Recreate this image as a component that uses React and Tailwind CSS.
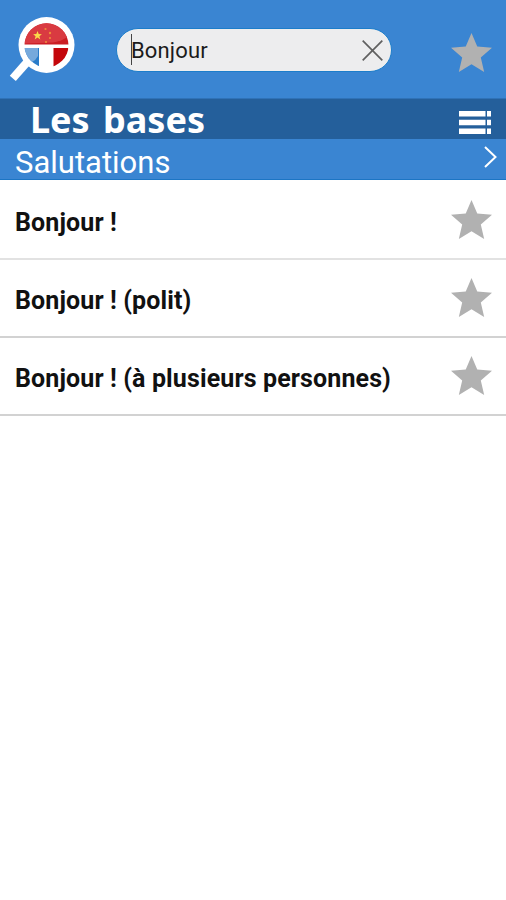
import React, { useState } from 'react';

const phrases = ["Bonjour !", "Bonjour ! (polit)", "Bonjour ! (à plusieurs personnes)"];

const Star = () => (
  <svg width="41" height="39" viewBox="2 2 20 19" preserveAspectRatio="none" fill="#b1b1b1">
    <path d="M12 17.27 18.18 21l-1.64-7.03L22 9.24l-7.19-.61L12 2 9.19 8.63 2 9.24l5.46 4.73L5.82 21z" />
  </svg>
);

const Logo = () => (
  <svg width="68" height="68" viewBox="8 14 68 68">
    <defs>
      <clipPath id="lens"><circle cx="46.5" cy="45.3" r="22" /></clipPath>
    </defs>
    <path d="M29 60 L12.800 78.300" stroke="#fff" strokeWidth="8" />
    <circle cx="46.5" cy="45" r="28" fill="#fff" />
    <g clipPath="url(#lens)">
      <rect x="24" y="22" width="45" height="22.5" fill="#cb1d24" />
      <path d="M24 22h45v14q-7 5-16 6.500L24 43.500z" fill="#d93a41" />
      <rect x="24" y="48" width="15" height="20" fill="#2a7cc9" />
      <path d="M24 48h14v8q-2 4-6 6h-8z" fill="#76a9dc" />
      <rect x="53.5" y="48" width="15" height="20" fill="#c4060b" />
    </g>
    <path d="M37.500 31l1.200 3 3.200.2-2.500 2 .9 3.200-2.800-1.800-2.800 1.800.9-3.200-2.500-2 3.200-.2z" fill="#fbd94a" />
    <g fill="#ee8a3c">
      <circle cx="45.5" cy="29" r="1.1" />
      <circle cx="50" cy="33" r="1.2" />
      <circle cx="50" cy="38" r="1.1" />
      <circle cx="46" cy="42" r="1.1" />
    </g>
  </svg>
);

const App = () => {
  const [search] = useState("Bonjour");

  return (
    <div className="flex h-[900px] w-[506px] flex-col overflow-hidden bg-white font-['Roboto',sans-serif]">
      <header className="flex h-[98px] items-start bg-[#3a85d2] pl-2 pr-[14px]">
        <div className="mt-[14px]"><Logo /></div>
        <div className="ml-[40px] mt-7 flex h-[44px] w-[276px] items-center rounded-full border border-[#1c7dca] bg-[#ededee] pl-[14px] pr-2">
          <span className="mb-0.5 h-[31px] w-px bg-[#444]"></span>
          <span className="-ml-px flex-1 pt-0.5 text-[22px] leading-[42px] tracking-[0.15px] text-[#1b1b1b]">{search}</span>
          <svg width="21" height="21" viewBox="0 0 21 21" stroke="#606060" strokeWidth="1.7">
            <path d="M.7 .7 20.3 20.3M20.3 .7 .7 20.3" />
          </svg>
        </div>
        <div className="ml-auto mt-[33px]"><Star /></div>
      </header>

      <div className="flex h-[41px] items-center justify-between border-t border-[#2f72b7] bg-[#245f9b] pl-[30px] pr-[15px]">
        <h1 className="pt-0.5 font-['Noto_Sans',sans-serif] text-[36px] font-bold leading-[38px] text-white [word-spacing:4px]">Les bases</h1>
        <svg className="mt-[6px]" width="32" height="23" viewBox="0 0 32 23" fill="#fff">
          <path d="M0 0h26.500v5.500H0zM28 0h4v5.500h-4zM0 8.800h26.500v5.500H0zM28 8.800h4v5.500h-4zM0 17.500h26.500v5.500H0zM28 17.500h4v5.500h-4z" />
        </svg>
      </div>

      <div className="flex h-[41px] items-center justify-between border-b border-[#1c75c4] bg-[#3a85d2] pl-[15px] pr-[9px]">
        <h2 className="mt-2 text-[31px] leading-[36px] text-white">Salutations</h2>
        <svg className="mb-1" width="13" height="22" viewBox="0 0 13 22" fill="none" stroke="#fff" strokeWidth="2">
          <path d="M1 1 11.500 11 1 21" />
        </svg>
      </div>

      <ul className="pt-0.5">
        {phrases.map((p) => (
          <li key={p} className="flex h-[78px] items-center justify-between border-b-2 border-[#d2d2d2] px-[14px] first:border-[#e2e2e2]">
            <span className="pl-px pt-[5px] text-[25px] font-bold tracking-[0.12px] text-[#111]">{p}</span>
            <div className="mb-0.5"><Star /></div>
          </li>
        ))}
      </ul>
    </div>
  );
};

export default App;
